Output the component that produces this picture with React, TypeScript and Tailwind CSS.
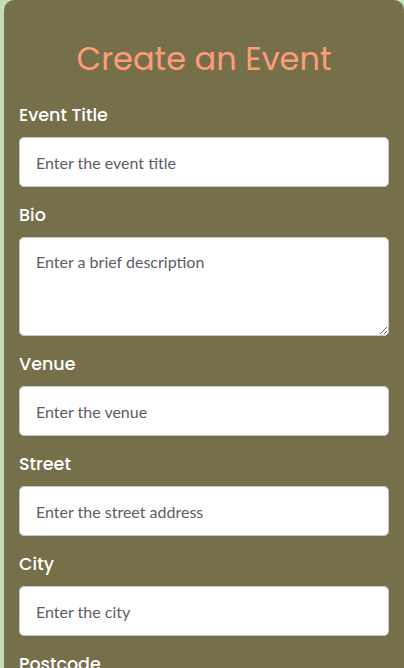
import React from 'react';

const fields = [
  { label: 'Event Title', placeholder: 'Enter the event title' },
  { label: 'Bio', placeholder: 'Enter a brief description', area: true },
  { label: 'Venue', placeholder: 'Enter the venue' },
  { label: 'Street', placeholder: 'Enter the street address' },
  { label: 'City', placeholder: 'Enter the city' },
  { label: 'Postcode', placeholder: 'Enter the postcode' },
  { label: 'Date', placeholder: 'Enter the date' },
];

const labelFont = { fontFamily: '"Poppins", "Inter", "Noto Sans", sans-serif' };
const inputFont = { fontFamily: 'Lato, "Liberation Sans", sans-serif' };

export default function App() {
  return (
    <div className="min-h-screen bg-[#c4ddb9] pl-1 overflow-hidden">
      <div className="w-[400px] bg-[#75704a] rounded-t-[10px] px-[15px] pt-[35px] pb-10">
        <h1
          className="text-[32px] leading-[48px] text-center text-[#ff9c78] mb-[20px]"
          style={labelFont}
        >
          Create an Event
        </h1>
        <form className="flex flex-col">
          {fields.map((f, i) => (
            <div key={i} className={i === 0 ? '' : 'mt-4'}>
              <label
                className="block text-white font-medium text-[17.5px] leading-6 mb-[10px]"
                style={labelFont}
              >
                {f.label}
              </label>
              {f.area ? (
                <textarea
                  placeholder={f.placeholder}
                  className="block w-full h-[99px] bg-white rounded-[5px] border border-[#c8c8c8] px-4 py-3 text-base text-[#333] placeholder:text-[#5b5e63] outline-none"
                  style={inputFont}
                />
              ) : (
                <input
                  placeholder={f.placeholder}
                  className="block w-full h-[50px] bg-white rounded-[5px] border border-[#c8c8c8] px-4 text-base text-[#333] placeholder:text-[#5b5e63] outline-none"
                  style={inputFont}
                />
              )}
            </div>
          ))}
        </form>
      </div>
    </div>
  );
}
